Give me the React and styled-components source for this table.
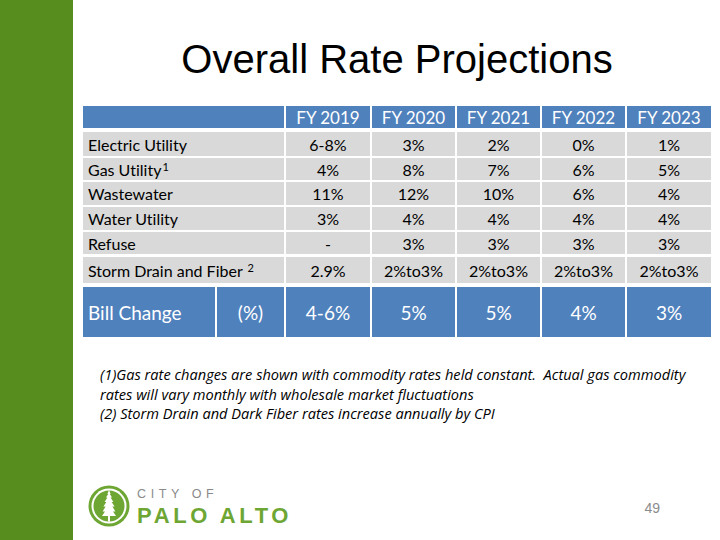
import React from "react";
import styled, { createGlobalStyle } from "styled-components";

const Global = createGlobalStyle`
  html, body {
    margin: 0;
    padding: 0;
    background: #fff;
  }
  body {
    font-family: "Lato", "Liberation Sans", sans-serif;
    font-variant-ligatures: none;
  }
`;

const Slide = styled.div`
  width: 720px;
  height: 540px;
  display: flex;
  overflow: hidden;
  background: #fff;
`;

const SideBar = styled.div`
  width: 73px;
  flex: 0 0 73px;
  background: #568d1e;
`;

const Main = styled.div`
  flex: 1;
  display: flex;
  flex-direction: column;
  padding: 39px 11px 0 10px;
  box-sizing: border-box;
`;

const Title = styled.h1`
  margin: 0;
  height: 40px;
  font-family: "Liberation Sans", Arial, sans-serif;
  font-weight: normal;
  font-size: 40px;
  line-height: 40px;
  text-align: center;
  color: #000;
`;

const Table = styled.div`
  margin-top: 27px;
  display: flex;
  flex-direction: column;
  gap: 2px;
`;

const Row = styled.div`
  display: grid;
  grid-template-columns: 132px 67px 84px 83px 83px 83px 84px;
  column-gap: 2px;
  height: ${(p) => p.$h}px;
  margin-top: ${(p) => p.$mt || 0}px;
`;

const sizes = { head: "17px", big: "19px", body: "16px" };

const Cell = styled.div`
  grid-column: ${(p) => (p.$span ? `span ${p.$span}` : "auto")};
  background: ${(p) => (p.$blue ? "#4f81bd" : "#d9d9d9")};
  color: ${(p) => (p.$blue ? "#fff" : "#000")};
  display: flex;
  align-items: center;
  justify-content: ${(p) => (p.$left ? "flex-start" : "center")};
  padding-left: ${(p) => (p.$left ? "5px" : "0")};
  font-size: ${(p) => sizes[p.$size || "body"]};
  white-space: nowrap;

  sup {
    font-size: 11px;
    line-height: 0;
    position: relative;
    top: -2px;
    margin-left: 1px;
  }
`;

const Notes = styled.div`
  margin-top: 28px;
  padding-left: 17px;
  font-family: "Open Sans", "Lato", sans-serif;
  font-style: italic;
  font-size: 14.6px;
  line-height: 19.5px;
  color: #000;

  span {
    display: block;
    white-space: nowrap;
  }
`;

const Footer = styled.div`
  margin-top: auto;
  height: 57px;
  display: flex;
  align-items: flex-start;
  justify-content: space-between;
  padding: 0 51px 0 5px;
`;

const Logo = styled.div`
  display: flex;
  align-items: center;
  gap: 7px;
  margin-top: 2px;
`;

const Wordmark = styled.div`
  display: flex;
  flex-direction: column;
  font-family: "Liberation Sans", Arial, sans-serif;
`;

const CityOf = styled.div`
  font-size: 12.5px;
  line-height: 14px;
  letter-spacing: 4.6px;
  color: #8a8a8a;
`;

const Palo = styled.div`
  margin-top: 4px;
  font-size: 22px;
  line-height: 21px;
  font-weight: bold;
  letter-spacing: 3.6px;
  color: #6ea634;
`;

const PageNum = styled.div`
  margin-top: 17px;
  font-family: "Liberation Sans", Arial, sans-serif;
  font-size: 14px;
  color: #8c8c8c;
`;

const years = ["FY 2019", "FY 2020", "FY 2021", "FY 2022", "FY 2023"];

const rows = [
  { label: "Electric Utility", vals: ["6-8%", "3%", "2%", "0%", "1%"], h: 24, mt: 2 },
  { label: <>Gas Utility<sup>1</sup></>, vals: ["4%", "8%", "7%", "6%", "5%"], h: 22 },
  { label: "Wastewater", vals: ["11%", "12%", "10%", "6%", "4%"], h: 23 },
  { label: "Water Utility", vals: ["3%", "4%", "4%", "4%", "4%"], h: 23 },
  { label: "Refuse", vals: ["-", "3%", "3%", "3%", "3%"], h: 22 },
  {
    label: <>Storm Drain and Fiber&nbsp;<sup>2</sup></>,
    vals: ["2.9%", "2%to3%", "2%to3%", "2%to3%", "2%to3%"],
    h: 26,
    mt: 1,
  },
];

function CityLogo() {
  return (
    <svg width="42" height="42" viewBox="0 0 42 42">
      <circle cx="21" cy="21" r="20.5" fill="#6ea634" />
      <circle cx="21" cy="21" r="17.5" fill="#fff" />
      <circle cx="21" cy="21" r="15.5" fill="#6ea634" />
      <polygon
        fill="#fff"
        points="21,5 22.6,9 21.8,9 24,12.5 22.6,12.5 25.4,17 23.6,17 26.6,21.5 24.4,21.5 27.4,26.5 25,26.5 28,31 22,31 22,36.6 20,36.6 20,31 14,31 17,26.5 14.6,26.5 17.6,21.5 15.4,21.5 18.4,17 16.6,17 19.4,12.5 18,12.5 20.2,9 19.4,9"
      />
    </svg>
  );
}

export default function App() {
  return (
    <>
      <Global />
      <Slide>
        <SideBar />
        <Main>
          <Title>Overall Rate Projections</Title>

          <Table>
            <Row $h={22}>
              <Cell $blue $span={2} />
              {years.map((y) => (
                <Cell $blue $size="head" key={y}>
                  {y}
                </Cell>
              ))}
            </Row>

            {rows.map((r, i) => (
              <Row $h={r.h} $mt={r.mt} key={i}>
                <Cell $left $span={2}>
                  {r.label}
                </Cell>
                {r.vals.map((v, j) => (
                  <Cell key={j}>{v}</Cell>
                ))}
              </Row>
            ))}

            <Row $h={50} $mt={2}>
              <Cell $blue $size="big" $left>
                Bill Change
              </Cell>
              <Cell $blue $size="big">
                (%)
              </Cell>
              {["4-6%", "5%", "5%", "4%", "3%"].map((v, j) => (
                <Cell $blue $size="big" key={j}>
                  {v}
                </Cell>
              ))}
            </Row>
          </Table>

          <Notes>
            <span>
              (1)Gas rate changes are shown with commodity rates held constant.&nbsp; Actual gas commodity
            </span>
            <span>rates will vary monthly with wholesale market fluctuations</span>
            <span>(2) Storm Drain and Dark Fiber rates increase annually by CPI</span>
          </Notes>

          <Footer>
            <Logo>
              <CityLogo />
              <Wordmark>
                <CityOf>CITY OF</CityOf>
                <Palo>PALO ALTO</Palo>
              </Wordmark>
            </Logo>
            <PageNum>49</PageNum>
          </Footer>
        </Main>
      </Slide>
    </>
  );
}
